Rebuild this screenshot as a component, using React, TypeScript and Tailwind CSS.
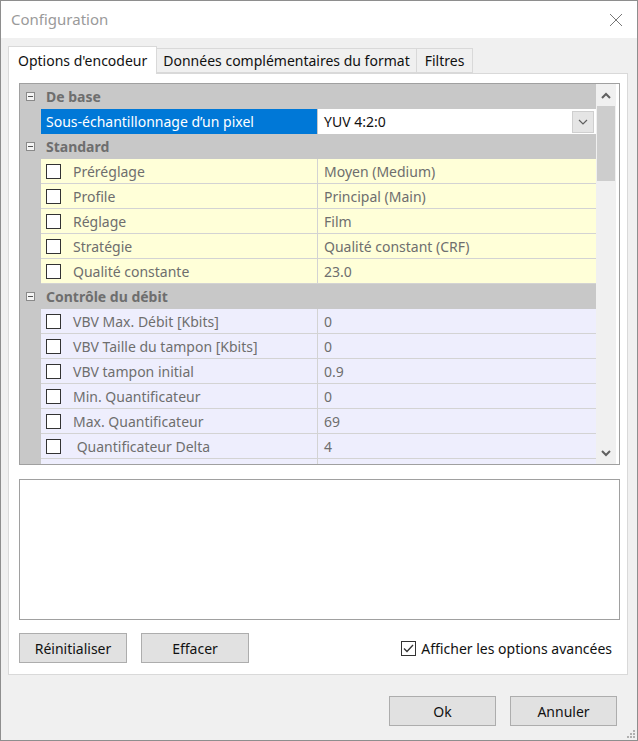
import React from "react";

const font = { fontFamily: '"Noto Sans", "Open Sans", sans-serif' };

type Row = { label: string; value: string };

const standard: Row[] = [
  { label: "Préréglage", value: "Moyen (Medium)" },
  { label: "Profile", value: "Principal (Main)" },
  { label: "Réglage", value: "Film" },
  { label: "Stratégie", value: "Qualité constant (CRF)" },
  { label: "Qualité constante", value: "23.0" },
];

const debit: Row[] = [
  { label: "VBV Max. Débit [Kbits]", value: "0" },
  { label: "VBV Taille du tampon [Kbits]", value: "0" },
  { label: "VBV tampon initial", value: "0.9" },
  { label: "Min. Quantificateur", value: "0" },
  { label: "Max. Quantificateur", value: "69" },
  { label: "\u00a0Quantificateur Delta", value: "4" },
  { label: "", value: "" },
];

function MinusBox() {
  return (
    <span className="w-[9px] h-[9px] border border-[#8a8a8a] bg-[#f4f4f4] flex items-center justify-center">
      <span className="w-[5px] h-px bg-[#555]" />
    </span>
  );
}

function Category({ title }: { title: string }) {
  return (
    <div className="h-[25px] bg-[#c8c8c8] flex items-center pl-[6px] gap-[11px]">
      <MinusBox />
      <span className="font-bold text-[#6e6e6e]">{title}</span>
    </div>
  );
}

function PropRow({ row, bg }: { row: Row; bg: string }) {
  return (
    <div className="h-[25px] flex">
      <div className="w-[21px] shrink-0 bg-[#c8c8c8]" />
      <div className={`flex-1 flex border-b border-[#d3d3d3] ${bg}`}>
        <div className="w-[277px] flex items-center pl-[5px] border-r border-[#d3d3d3] text-[#6e6e6e]">
          <span className="w-[15px] h-[15px] border border-[#333] bg-white shrink-0" />
          <span className="ml-[12px] whitespace-pre">{row.label}</span>
        </div>
        <div className="flex-1 flex items-center pl-[6px] text-[#6e6e6e]">{row.value}</div>
      </div>
    </div>
  );
}

function Chevron({ dir }: { dir: "up" | "down" }) {
  return (
    <svg width="10" height="7" viewBox="0 0 10 7">
      <path
        d={dir === "up" ? "M1 6 L5 2 L9 6" : "M1 1 L5 5 L9 1"}
        fill="none"
        stroke="#606060"
        strokeWidth="2"
      />
    </svg>
  );
}

function Button({ children, w }: { children: React.ReactNode; w: string }) {
  return (
    <button className={`${w} h-[30px] bg-[#e1e1e1] border border-[#adadad] text-[#111]`}>
      {children}
    </button>
  );
}

export default function App() {
  return (
    <div
      className="w-[638px] h-[741px] border border-[#8e8e8e] flex flex-col text-[14px] bg-[#f0f0f0] overflow-hidden"
      style={font}
    >
      <div className="h-[37px] bg-white flex items-center justify-between pl-[10px] pr-[14px] shrink-0">
        <span className="text-[15px] text-[#9a9a9a]">Configuration</span>
        <svg width="14" height="14" viewBox="0 0 14 14">
          <path d="M1 1 L13 13 M13 1 L1 13" stroke="#777" strokeWidth="1" />
        </svg>
      </div>

      <div className="flex-1 flex flex-col px-[7px] pt-[7px] relative">
        <div className="flex items-end h-[28px] text-[#111]">
          <div className="h-[28px] px-[9px] bg-white border border-b-0 border-[#d9d9d9] flex items-center relative z-10 -mb-px">
            Options d'encodeur
          </div>
          <div className="h-[25px] px-[6px] border border-l-0 border-[#d9d9d9] flex items-center">
            Données complémentaires du format
          </div>
          <div className="h-[25px] px-[8px] border border-l-0 border-[#d9d9d9] flex items-center">
            Filtres
          </div>
        </div>

        <div className="h-[602px] w-[620px] bg-white border border-[#d9d9d9] flex flex-col pl-[10px] pt-[9px]">
          <div className="h-[382px] w-[601px] border border-[#a0a0a0] flex bg-white">
            <div className="w-[576px] overflow-hidden">
              <Category title="De base" />
              <div className="h-[25px] flex">
                <div className="w-[21px] shrink-0 bg-[#c8c8c8]" />
                <div className="w-[277px] bg-[#0078d7] text-white flex items-center pl-[5px] border-r border-[#c8c8c8]">
                  Sous-échantillonnage d’un pixel
                </div>
                <div className="flex-1 bg-white flex items-center justify-between pl-[6px] pr-[2px] text-[#111]">
                  <span>YUV 4:2:0</span>
                  <span className="w-[22px] h-[22px] bg-[#e5e5e5] border border-[#cfcfcf] flex items-center justify-center">
                    <svg width="10" height="6" viewBox="0 0 10 6">
                      <path d="M1 1 L5 5 L9 1" fill="none" stroke="#606060" strokeWidth="1.2" />
                    </svg>
                  </span>
                </div>
              </div>
              <Category title="Standard" />
              {standard.map((r) => (
                <PropRow key={r.label} row={r} bg="bg-[#ffffd8]" />
              ))}
              <Category title="Contrôle du débit" />
              {debit.map((r, i) => (
                <PropRow key={i} row={r} bg="bg-[#eeeefd]" />
              ))}
            </div>
            <div className="w-[20px] bg-[#f0f0f0] flex flex-col items-center">
              <div className="h-[22px] flex items-center justify-center">
                <Chevron dir="up" />
              </div>
              <div className="w-[18px] h-[75px] bg-[#cdcdcd]" />
              <div className="flex-1" />
              <div className="h-[22px] flex items-center justify-center">
                <Chevron dir="down" />
              </div>
            </div>
          </div>

          <div className="mt-[14px] h-[141px] w-[601px] border border-[#a0a0a0] bg-white" />

          <div className="mt-[13px] w-[593px] flex items-center">
            <Button w="w-[108px]">Réinitialiser</Button>
            <div className="ml-[14px]">
              <Button w="w-[108px]">Effacer</Button>
            </div>
            <div className="ml-auto flex items-center gap-[5px] text-[#111]">
              <span className="w-[15px] h-[15px] border border-[#333] bg-white flex items-center justify-center">
                <svg width="11" height="9" viewBox="0 0 11 9">
                  <path d="M1 4.5 L4 7.5 L10 1" fill="none" stroke="#333" strokeWidth="1.3" />
                </svg>
              </span>
              <span>Afficher les options avancées</span>
            </div>
          </div>
        </div>

        <div className="flex justify-end gap-[14px] mt-[21px] pr-[13px]">
          <Button w="w-[107px]">Ok</Button>
          <Button w="w-[107px]">Annuler</Button>
        </div>

        <svg className="absolute right-[1px] bottom-[1px]" width="10" height="10" viewBox="0 0 10 10">
          <g fill="#b0b0b0">
            <rect x="7" y="1" width="2" height="2" />
            <rect x="4" y="4" width="2" height="2" />
            <rect x="7" y="4" width="2" height="2" />
            <rect x="1" y="7" width="2" height="2" />
            <rect x="4" y="7" width="2" height="2" />
            <rect x="7" y="7" width="2" height="2" />
          </g>
        </svg>
      </div>
    </div>
  );
}
